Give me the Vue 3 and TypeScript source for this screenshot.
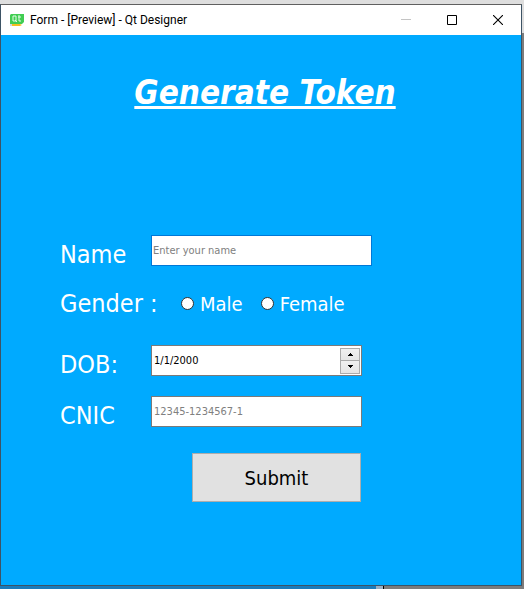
<script setup lang="ts">
import { ref } from 'vue'

const name = ref('')
const gender = ref('')
const dob = ref('1/1/2000')
const cnic = ref('')

function stepMonth(delta: number): void {
  const [month, day, year] = dob.value.split('/').map(Number)
  const next = Math.min(12, Math.max(1, month + delta))
  dob.value = `${next}/${day}/${year}`
}
</script>

<template>
  <div class="desktop">
    <section class="window">
      <header class="titlebar">
        <svg class="logo" width="16" height="16" viewBox="0 0 16 16" aria-hidden="true">
          <path d="M2 2H15V10L13 12H1V3Z" fill="#41cd52" />
          <path d="M4 4H7V9H4ZM6 8L8 10M10 3V9H12M9 5H12" fill="none" stroke="#e4ffe6" stroke-width="1" />
          <path d="M3 12H11L13 13L11 14H3Z" fill="#f5bd20" />
          <path d="M1 12H3V14H1Z" fill="#d8d8d8" />
        </svg>
        <span class="caption">Form - [Preview] - Qt Designer</span>
        <button class="control" type="button" aria-label="Minimize" disabled>
          <svg width="10" height="10" viewBox="0 0 10 10"><path d="M0 4.5H10" stroke="#c4c4c4" /></svg>
        </button>
        <button class="control" type="button" aria-label="Maximize">
          <svg width="10" height="10" viewBox="0 0 10 10"><path d="M.5 .5H9.5V9.5H.5Z" fill="none" stroke="#000" /></svg>
        </button>
        <button class="control" type="button" aria-label="Close">
          <svg width="10" height="10" viewBox="0 0 10 10"><path d="M0 0L10 10M10 0L0 10" stroke="#000" stroke-width="1.1" /></svg>
        </button>
      </header>

      <main class="client">
        <h1 class="heading">Generate Token</h1>
        <form class="form" @submit.prevent>
          <div class="row">
            <label class="label" for="name">Name</label>
            <input id="name" v-model="name" class="field wide focused" type="text" placeholder="Enter your name" />
          </div>
          <div class="row genders" role="radiogroup" aria-labelledby="gender-label">
            <span id="gender-label" class="label">Gender :</span>
            <div class="options">
              <label class="option"><input v-model="gender" class="radio" type="radio" name="gender" value="male" />Male</label>
              <label class="option"><input v-model="gender" class="radio" type="radio" name="gender" value="female" />Female</label>
            </div>
          </div>
          <div class="row">
            <label class="label" for="dob">DOB:</label>
            <div class="field date">
              <input id="dob" v-model="dob" class="date-text" type="text" />
              <div class="spinner">
                <button class="step" type="button" aria-label="Increase" @click="stepMonth(1)">
                  <svg width="5" height="3" viewBox="0 0 5 3" shape-rendering="crispEdges"><path d="M2 0H3V1H4V2H5V3H0V2H1V1H2Z" /></svg>
                </button>
                <button class="step" type="button" aria-label="Decrease" @click="stepMonth(-1)">
                  <svg width="5" height="3" viewBox="0 0 5 3" shape-rendering="crispEdges"><path d="M0 0H5V1H4V2H3V3H2V2H1V1H0Z" /></svg>
                </button>
              </div>
            </div>
          </div>
          <div class="row">
            <label class="label" for="cnic">CNIC</label>
            <input id="cnic" v-model="cnic" class="field" type="text" placeholder="12345-1234567-1" />
          </div>
          <button class="submit" type="submit">Submit</button>
        </form>
      </main>
    </section>
    <footer class="backdrop"><span class="pane"></span><span class="edge"></span><span class="rest"></span></footer>
  </div>
</template>

<style>
body {
  margin: 0;
}
</style>

<style scoped>
.desktop {
  box-sizing: border-box;
  min-height: 100vh;
  display: flex;
  flex-direction: column;
  padding: 4px 2px 0 0;
  background: linear-gradient(#dedede 33px, #7c7c7c 33px);
  font-family: "DejaVu Sans Condensed", "Noto Sans", sans-serif;
}

.window {
  flex: 1;
  display: flex;
  flex-direction: column;
  border: 1px solid #3d5365;
  border-top-color: #606060;
  background: #00aaff;
}

.titlebar {
  display: flex;
  align-items: center;
  height: 30px;
  background: #fff;
}

.logo {
  margin: 0 5px 0 8px;
}

.caption {
  flex: 1;
  font-family: Roboto, "Noto Sans", sans-serif;
  font-size: 12px;
  white-space: nowrap;
}

.control {
  display: grid;
  place-items: center;
  width: 46px;
  height: 30px;
  padding: 0;
  border: 0;
  background: none;
}

.client {
  padding: 36px 59px 0;
  color: #fff;
}

.heading {
  margin: 0 0 116px;
  padding-left: 8px;
  font-size: 33px;
  line-height: 44px;
  font-style: italic;
  text-align: center;
  text-decoration: underline;
  text-decoration-thickness: 3px;
  text-underline-offset: 2px;
  text-decoration-skip-ink: none;
  white-space: nowrap;
}

.form {
  display: flex;
  flex-direction: column;
  gap: 20px;
}

.row {
  display: grid;
  grid-template-columns: 91px 1fr;
  align-items: center;
  height: 31px;
}

.genders {
  box-sizing: border-box;
  height: 39px;
  padding-top: 4px;
}

.label {
  padding-top: 8px;
  font-size: 25px;
  line-height: 31px;
  white-space: nowrap;
}

.genders .label {
  padding-top: 0;
}

.field {
  box-sizing: border-box;
  width: 100%;
  max-width: 211px;
  height: 31px;
  padding: 0 2px;
  border: 1px solid #7a7a7a;
  background: #fff;
  color: #000;
  font-family: inherit;
  font-size: 11px;
  outline: 0;
}

.field::placeholder {
  color: #808080;
  opacity: 1;
}

.wide {
  max-width: 221px;
  padding: 0 1px;
}

.focused {
  border-color: #0078d7;
}

.options {
  display: flex;
  gap: 18px;
  padding-left: 30px;
}

.option {
  display: flex;
  align-items: center;
  gap: 6px;
  font-size: 20px;
  line-height: 24px;
}

.radio {
  appearance: none;
  box-sizing: border-box;
  width: 13px;
  height: 13px;
  margin: 0;
  border: 1px solid #333;
  border-radius: 50%;
  background: #fff;
}

.radio:checked {
  background: radial-gradient(#333 3px, #fff 4px);
}

.date {
  display: flex;
  align-items: center;
  padding-right: 1px;
}

.date-text {
  flex: 1;
  min-width: 0;
  padding: 0;
  border: 0;
  outline: 0;
  background: none;
  font: inherit;
}

.spinner {
  display: grid;
  width: 20px;
  height: 26px;
  grid-template-rows: 1fr 1fr;
}

.step {
  display: grid;
  place-items: center;
  padding: 0;
  border: 1px solid #ababab;
  background: linear-gradient(#f0f0f0, #e5e5e5);
}

.step + .step {
  border-top: 0;
}

.submit {
  box-sizing: border-box;
  width: 169px;
  height: 49px;
  margin: 10px 0 0 132px;
  padding: 0;
  border: 1px solid #adadad;
  background: #e1e1e1;
  color: #000;
  font-family: inherit;
  font-size: 20px;
}

.backdrop {
  display: flex;
  height: 3px;
}

.pane {
  width: 72%;
  background: #1a7bbb;
}

.edge {
  width: 7px;
  border-right: 1px solid #000;
  background: #9bb0c4;
}

.rest {
  flex: 1;
  background: #7c7c7c;
}
</style>
